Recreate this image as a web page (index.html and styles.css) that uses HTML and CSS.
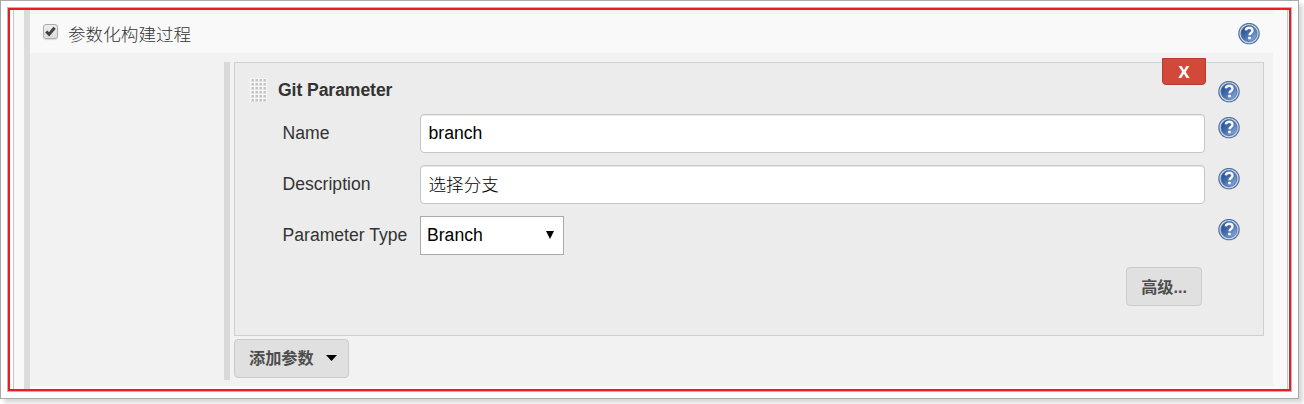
FILE: index.html
```html
<!DOCTYPE html>
<html lang="zh-CN">
<head>
<meta charset="utf-8">
<title>参数化构建过程</title>
<link rel="stylesheet" href="styles.css">
</head>
<body>
<svg class="defs" width="0" height="0" aria-hidden="true">
  <defs>
    <linearGradient id="ball" x1="0" y1="0" x2="1" y2="1">
      <stop offset="0" stop-color="#1a4488"/>
      <stop offset=".5" stop-color="#4870ae"/>
      <stop offset="1" stop-color="#9dbce2"/>
    </linearGradient>
    <symbol id="help" viewBox="0 0 22 22">
      <circle cx="11" cy="10.6" r="10.2" fill="#c6d5e8" stroke="#4f729f" stroke-width="1.1"/>
      <circle cx="11" cy="10.6" r="8" fill="url(#ball)" stroke="#456ba3" stroke-width=".8"/>
      <path d="M7.8 7.4C8 5.4 9.4 4.7 11.2 4.7c2 0 3.3 1 3.3 2.7 0 2.6-3 2.5-3 4.9" fill="none" stroke="#f4f7fb" stroke-width="2.4"/>
      <rect x="10.1" y="13.7" width="2.7" height="2.6" rx=".5" fill="#f4f7fb"/>
    </symbol>
  </defs>
</svg>
<div class="frame">
  <div class="outline">
    <div class="page">
      <div class="section">
        <div class="section-head">
          <span class="checkbox"><svg width="15" height="15" viewBox="0 0 15 15"><path d="M3.2 7.5l2.9 2.9 5.5-6.6" fill="none" stroke="#424242" stroke-width="3"/></svg></span>
          <span class="section-title">参数化构建过程</span>
          <svg class="help"><use href="#help"/></svg>
        </div>
        <div class="section-body">
          <div class="nested">
            <div class="panel">
              <button class="delete">X</button>
              <div class="panel-head">
                <svg class="grip" width="17" height="24">
                  <defs><pattern id="dots" width="4" height="4" patternUnits="userSpaceOnUse">
                    <rect width="4" height="4" fill="#f7f7f7"/><path d="M1 1h3v3H1z" fill="#dedede"/><path d="M2 1h2v2H2z" fill="#c4c4c4"/>
                  </pattern></defs>
                  <rect width="17" height="24" fill="url(#dots)"/>
                </svg>
                <b class="panel-title">Git Parameter</b>
                <svg class="help"><use href="#help"/></svg>
              </div>
              <div class="row">
                <span class="label">Name</span>
                <div class="input">branch</div>
                <svg class="help"><use href="#help"/></svg>
              </div>
              <div class="row">
                <span class="label">Description</span>
                <div class="input cjk">选择分支</div>
                <svg class="help"><use href="#help"/></svg>
              </div>
              <div class="row">
                <span class="label">Parameter Type</span>
                <div class="select">Branch<svg width="10" height="8"><path d="M1 0h8L5 8z"/></svg></div>
                <svg class="help"><use href="#help"/></svg>
              </div>
              <div class="actions"><button class="button">高级...</button></div>
            </div>
            <button class="button add">添加参数<svg width="11" height="6"><path d="M0 0h11L5.5 6z"/></svg></button>
          </div>
        </div>
      </div>
    </div>
  </div>
</div>
</body>
</html>
```
FILE: styles.css
```css
* { box-sizing: border-box; }
body {
  margin: 0;
  height: 404px;
  overflow: hidden;
  background: #fff;
  color: #333;
  font: 17.6px/20px "Liberation Sans", "Noto Sans CJK SC", sans-serif;
}
.defs { display: block; height: 0; }
svg { display: block; flex: none; }
button { font: inherit; margin: 0; }
.frame {
  width: 1299px;
  height: 399px;
  padding: 6px;
  border: 1px solid #a9a9a9;
  background: #fff;
  box-shadow: 4px 4px 4px #d8d8d8;
}
.outline {
  width: 1285px;
  height: 385px;
  border: 1px solid #b8b8b8;
}
.page {
  height: 383px;
  padding: 0 1px 0 3px;
  border: 2px solid #ed1c24;
}
.section {
  height: 379px;
  padding: 0 14px 0 10px;
  border: solid #c8c8c8;
  border-width: 0 1px;
  background: #f9f9f9;
}
.section-head, .section-body {
  border-left: 6px solid #dcdcdc;
}
.section-head {
  display: flex;
  align-items: flex-start;
  height: 43px;
  padding: 13px 13px 0 13px;
  box-shadow: inset 0 4px #f5f5f5;
}
.section-title { margin: 2px auto 0 10px; font-weight: 300; }
.checkbox {
  width: 15px;
  height: 15px;
  margin-top: 1px;
  border: 1px solid #ababab;
  border-radius: 3px;
  background: linear-gradient(#ededed, #dcdcdc);
  box-shadow: 0 1px 1px #d8d8d8;
}
.checkbox svg { margin: -1px; }
.help { width: 22px; height: 22px; }
.section-body {
  height: 336px;
  padding: 9px 9px 0 194px;
  background: linear-gradient(#f2f2f2 333px, #f9f9f9 333px);
}
.nested {
  height: 318px;
  padding-left: 4px;
  border-left: 6px solid #d9d9d9;
}
.panel {
  position: relative;
  height: 274px;
  padding: 15px 23px 0 15px;
  border: 1px solid #d0d0d0;
  background: #ececec;
}
.delete {
  position: absolute;
  top: -5px;
  right: 57px;
  width: 44px;
  height: 27px;
  padding: 0;
  border: 1px solid #bd362f;
  border-radius: 0 0 4px 4px;
  background: #d24939;
  color: #fff;
  font: bold 16.5px/26px "Open Sans", sans-serif;
}
.panel-head {
  display: flex;
  height: 36px;
}
.panel-head .help { margin: 3px 0 0 auto; }
.panel-title { margin: 2px 0 0 11px; letter-spacing: -0.08px; }
.row {
  display: grid;
  grid-template-columns: 137px 785px 22px;
  align-items: start;
  height: 51px;
  padding-left: 33px;
}
.row .help { margin: 3px 0 0 13px; }
.label { margin-left: -0.5px; padding-top: 9px; white-space: nowrap; }
.input {
  height: 39px;
  padding: 8px 7.5px;
  border: 1px solid #c6c6c6;
  border-radius: 4px;
  background: #fff;
  box-shadow: inset 0 1px 1px #e8e8e8;
  color: #000;
}
.cjk { padding-top: 9px; font-weight: 300; }
.select {
  display: flex;
  justify-content: space-between;
  width: 144px;
  height: 39px;
  padding: 8px 8px 0 6px;
  border: 1px solid #a9a9a9;
  background: #fff;
  color: #000;
}
.select svg { margin-top: 6px; }
.actions {
  display: flex;
  justify-content: flex-end;
  padding-right: 38px;
}
.button {
  display: flex;
  align-items: center;
  height: 39px;
  padding: 0 14px;
  border: 1px solid #cacaca;
  border-radius: 4px;
  background: #e0e0e0;
  color: #4d4d4d;
  font-size: 16.2px;
  font-weight: bold;
}
.add { width: 115px; margin-top: 3px; gap: 12px; padding: 0 0 1px 14px; }
```
